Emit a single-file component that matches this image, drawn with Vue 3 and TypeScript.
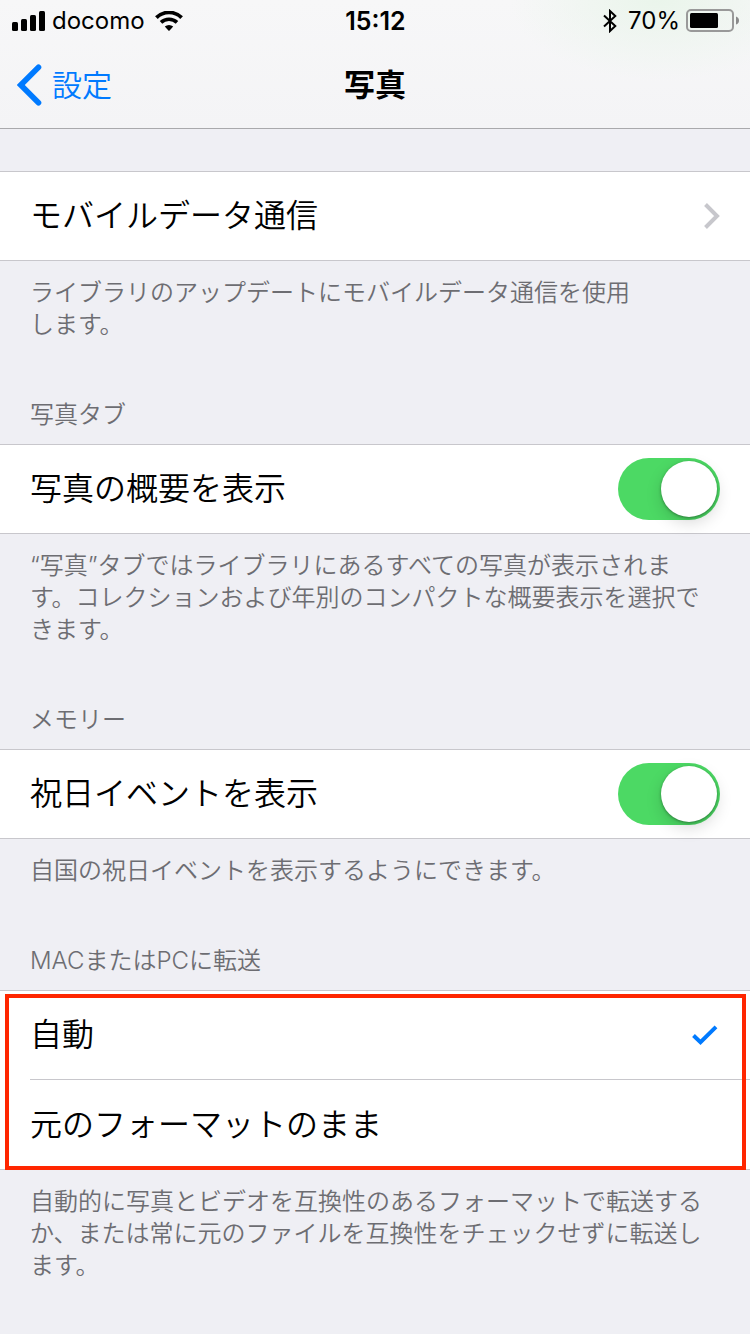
<script setup lang="ts">
import { ref } from 'vue'

type TransferMode = 'auto' | 'original'

const showSummary = ref(true)
const showHolidays = ref(true)
const transfer = ref<TransferMode>('auto')

const transferOptions: { value: TransferMode; label: string }[] = [
  { value: 'auto', label: '自動' },
  { value: 'original', label: '元のフォーマットのまま' },
]
</script>

<template>
  <div class="screen">
    <header class="top">
      <div class="status">
        <div class="status-side">
          <svg class="signal" viewBox="0 0 33 20" width="33" height="20" aria-hidden="true">
            <rect x="0" y="11" width="6" height="9" rx="1.5" />
            <rect x="9" y="8" width="6" height="12" rx="1.5" />
            <rect x="18" y="4" width="6" height="16" rx="1.5" />
            <rect x="27" y="0" width="6" height="20" rx="1.5" />
          </svg>
          <span class="carrier">docomo</span>
          <svg class="wifi" viewBox="0 0 28 20" width="28" height="20" aria-hidden="true">
            <path d="M1.4 6.6 A18 18 0 0 1 26.6 6.6" fill="none" stroke="#000" stroke-width="3.8" />
            <path d="M6 11.4 A11.6 11.6 0 0 1 22 11.4" fill="none" stroke="#000" stroke-width="3.6" />
            <path d="M9.8 15.6 A6.2 6.2 0 0 1 18.2 15.6 L14.6 19.5 Q14 20 13.4 19.5 Z" />
          </svg>
        </div>
        <span class="clock">15:12</span>
        <div class="status-side end">
          <svg class="bluetooth" viewBox="0 0 14 24" width="14" height="24" aria-hidden="true">
            <path d="M1 6.4 L12.3 16.9 L7 22 V2 L12.3 7.1 L1 17.6" fill="none" stroke="#000" stroke-width="2" />
          </svg>
          <span class="percent">70%</span>
          <svg class="battery" viewBox="0 0 53 24" width="53" height="24" aria-hidden="true">
            <rect x="1" y="1" width="46" height="21" rx="4" fill="none" stroke="#999" stroke-width="2" />
            <rect x="4" y="4" width="28" height="15" rx="1.5" />
            <path d="M50 7.5 Q53 8.5 53 11.5 Q53 14.5 50 15.5 Z" fill="#8a8a8a" />
          </svg>
        </div>
      </div>
      <nav class="nav">
        <button class="back" type="button">
          <svg viewBox="0 0 25 42" width="25" height="42" aria-hidden="true">
            <path d="M21.5 3.2 L3.8 21 L21.5 38.8" fill="none" stroke="#007aff" stroke-width="5.6" stroke-linecap="round" stroke-linejoin="miter" />
          </svg>
          <span>設定</span>
        </button>
        <h1 class="title">写真</h1>
      </nav>
    </header>

    <main class="content">
      <section class="section">
        <div class="group">
          <button class="row" type="button">
            <span>モバイルデータ通信</span>
            <svg viewBox="0 0 16 26" width="16" height="26" aria-hidden="true">
              <path d="M1.5 1.5 L13 13 L1.5 24.5" fill="none" stroke="#c7c7cc" stroke-width="4" />
            </svg>
          </button>
        </div>
        <p class="note">ライブラリのアップデートにモバイルデータ通信を使用<br />します。</p>
      </section>

      <section class="section">
        <h2 class="heading">写真タブ</h2>
        <div class="group">
          <label class="row">
            <span>写真の概要を表示</span>
            <input v-model="showSummary" class="switch" type="checkbox" />
          </label>
        </div>
        <p class="note">“写真”タブではライブラリにあるすべての写真が表示されま<br />す。コレクションおよび年別のコンパクトな概要表示を選択で<br />きます。</p>
      </section>

      <section class="section">
        <h2 class="heading">メモリー</h2>
        <div class="group">
          <label class="row">
            <span>祝日イベントを表示</span>
            <input v-model="showHolidays" class="switch" type="checkbox" />
          </label>
        </div>
        <p class="note">自国の祝日イベントを表示するようにできます。</p>
      </section>

      <section class="section">
        <h2 class="heading">MACまたはPCに転送</h2>
        <div class="group">
          <label v-for="option in transferOptions" :key="option.value" class="row">
            <span>{{ option.label }}</span>
            <input v-model="transfer" class="choice" type="radio" name="transfer" :value="option.value" />
            <svg v-if="transfer === option.value" class="tick" viewBox="0 0 26 20" width="26" height="20" aria-hidden="true">
              <path d="M1.5 10.5 L8.5 17.2 L24 1.8" fill="none" stroke="#007aff" stroke-width="4" />
            </svg>
          </label>
          <div class="highlight"></div>
        </div>
        <p class="note">自動的に写真とビデオを互換性のあるフォーマットで転送する<br />か、または常に元のファイルを互換性をチェックせずに転送し<br />ます。</p>
      </section>
    </main>
  </div>
</template>

<style>
body {
  background: #efeff4;
}
</style>

<style scoped>
.screen {
  min-height: 100vh;
  background: #efeff4;
  color: #000;
  font-family: Inter, "Noto Sans CJK JP", sans-serif;
  font-weight: 350;
}

.top {
  border-bottom: 1px solid #a9a9ac;
  background:
    radial-gradient(ellipse 150px 80px at 88% 0, #eaf5eb, transparent),
    linear-gradient(#f7f7f8, #f4f4f6);
}

.status {
  display: grid;
  grid-template-columns: 1fr auto 1fr;
  align-items: center;
  height: 41px;
  padding: 0 11px 0 12px;
  font-size: 24px;
  font-weight: 400;
  line-height: 40px;
}

.status-side {
  display: flex;
  align-items: center;
}

.end {
  justify-content: flex-end;
}

.carrier {
  margin: 0 10px 0 7px;
}

.clock {
  font-size: 25px;
  font-weight: 600;
}

.percent {
  margin: 0 6px 0 11px;
}

.nav {
  display: grid;
  grid-template-columns: 1fr auto 1fr;
  align-items: center;
  height: 87px;
  padding: 0 17px;
}

.back {
  display: flex;
  align-items: center;
  gap: 10px;
  justify-self: start;
  padding: 0;
  border: 0;
  background: none;
  color: #007aff;
  font: inherit;
  font-size: 30px;
  line-height: 40px;
}

.title {
  margin: 0;
  font-size: 31px;
  font-weight: 700;
  line-height: 40px;
}

.content {
  padding: 42px 0 54px;
}

.section + .section {
  margin-top: 58px;
}

.heading {
  margin: 0;
  padding: 0 30px 13px;
  color: #6d6d72;
  font-size: 24px;
  font-weight: inherit;
  line-height: 32px;
}

.note {
  margin: 0;
  padding: 16px 30px 0;
  color: #6d6d72;
  font-size: 24px;
  line-height: 32px;
  white-space: nowrap;
}

.group {
  position: relative;
  border: solid #c8c7cc;
  border-width: 1px 0;
  background: #fff;
}

.row {
  display: flex;
  align-items: center;
  justify-content: space-between;
  box-sizing: border-box;
  width: 100%;
  min-height: 88px;
  padding: 0 30px;
  border: 0;
  background: none;
  color: inherit;
  font: inherit;
  font-size: 32px;
  line-height: 44px;
  text-align: left;
}

.row + .row {
  width: auto;
  min-height: 90px;
  margin-left: 30px;
  padding-left: 0;
  border-top: 1px solid #c8c7cc;
}

.switch {
  appearance: none;
  box-sizing: border-box;
  width: 102px;
  height: 62px;
  margin: 0;
  padding: 3px;
  border-radius: 31px;
  background: #e5e5ea;
}

.switch::before {
  content: "";
  display: block;
  width: 56px;
  height: 56px;
  border-radius: 50%;
  background: #fff;
  box-shadow: 0 1px 3px rgba(0, 0, 0, 0.35), 0 6px 16px rgba(0, 0, 0, 0.15);
}

.switch:checked {
  background: #4cd964;
}

.switch:checked::before {
  margin-left: auto;
}

.choice {
  appearance: none;
  width: 0;
  height: 0;
  margin: 0 0 0 auto;
}

.tick {
  margin-right: 2px;
}

.highlight {
  position: absolute;
  inset: 3px 4px -1px 5px;
  border: 4px solid #ff2600;
  pointer-events: none;
}
</style>
